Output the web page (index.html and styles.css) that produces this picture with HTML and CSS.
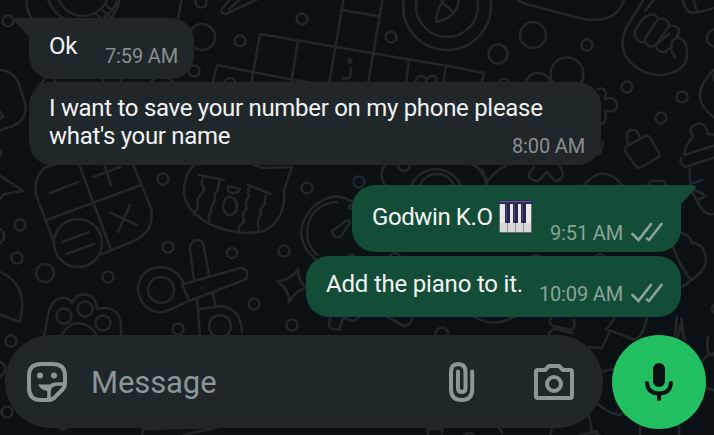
FILE: index.html
```html
<!DOCTYPE html>
<html lang="en">
<head>
  <meta charset="UTF-8">
  <title>Chat</title>
  <link rel="stylesheet" href="styles.css">
</head>
<body>
  <!-- wallpaper -->
  <svg class="wallpaper" viewBox="0 0 714 435" aria-hidden="true">
    <!-- bubbles and dots -->
    <g>
      <circle cx="8" cy="21" r="5.5"/><circle cx="201" cy="2" r="5.5"/><circle cx="202" cy="37" r="13"/>
      <circle cx="240" cy="41" r="5.5"/><circle cx="194" cy="71" r="5.5"/><circle cx="302" cy="19" r="5.5"/>
      <circle cx="391" cy="37" r="5.5"/><circle cx="533" cy="35" r="13"/><circle cx="498" cy="54" r="9.5"/>
      <circle cx="587" cy="45" r="5.5"/><circle cx="567" cy="74" r="16.5"/><circle cx="538" cy="86" r="13"/>
      <circle cx="627" cy="87" r="5.5"/><circle cx="682" cy="97" r="5.5"/><circle cx="661" cy="118" r="5.5"/>
      <circle cx="716" cy="38" r="9"/><circle cx="504" cy="84" r="5"/><circle cx="230" cy="83" r="5"/>
      <circle cx="163" cy="179" r="5.5"/><circle cx="307" cy="188" r="5.5"/><circle cx="359" cy="182" r="5.5"/>
      <circle cx="404" cy="165" r="6"/><circle cx="20" cy="225" r="5.5"/><circle cx="17" cy="258" r="5.5"/>
      <circle cx="-4" cy="236" r="8"/><circle cx="45" cy="273" r="9"/><circle cx="168" cy="247" r="5.5"/>
      <circle cx="232" cy="253" r="5"/><circle cx="284" cy="251" r="5.5"/><circle cx="108" cy="277" r="5.5"/>
      <circle cx="254" cy="304" r="5.5"/><circle cx="292" cy="325" r="5.5"/><circle cx="178" cy="329" r="5.5"/>
      <circle cx="11" cy="341" r="5.5"/><circle cx="-3" cy="369" r="8"/><circle cx="7" cy="412" r="5.5"/>
      <circle cx="442" cy="334" r="6.5"/><circle cx="395" cy="258" r="5"/><circle cx="600" cy="259" r="5"/>
      <circle cx="536" cy="260" r="5"/><circle cx="717" cy="309" r="5"/><circle cx="-4" cy="153" r="5"/>
      <circle cx="351" cy="207" r="2"/><circle cx="351" cy="256" r="2"/><circle cx="469" cy="440" r="7"/>
    </g>
    <!-- watch and folder corners -->
    <g>
      <circle cx="83" cy="-13" r="37"/><circle cx="83" cy="-10" r="26"/>
      <path d="M27 -4Q25 9 32 19M95 13l10 9M101 9l10 9M106 5l9 8M182 -2l-4 20M120 -2q-2 12-9 20"/>
      <path d="M0 70Q14 71 19 84L25 103Q28 119 13 126L-2 131M-1 110l4 7-4 2"/>
      <path d="M37 88l8-9M55 78v6M103 78v6M121 78v6M150 83q4-6 12-6t14 8"/>
      <path d="M222 9L233 -4M222 9Q220 14 226 14L258 -1M229 9L242 -2"/>
    </g>
    <!-- crossword -->
    <g>
      <path d="M344 -3L328 90M383 -3L367 90M341 10L378 16M260 34L448 66L484 73L480 90M260 34L250 90M298 41L290 90M217 65L294 80L340 87M217 65L211 90M409 60L405 90M446 67L442 90"/>
      <path d="M351 68l-1 9q-2 3-7 1" class="thick"/><circle cx="350" cy="61" r="1.2" class="thick"/>
      <path d="M415 84q1-9 7-8 5 1 4 8M426 81q3-7 8-5 4 1 2 8"/>
    </g>
    <!-- compass -->
    <g>
      <circle cx="447" cy="6" r="44"/><circle cx="447" cy="6" r="31"/>
      <path d="M445 -2Q436 10 436 22Q449 20 456 10L460 -2M441 1l12 11"/>
    </g>
    <!-- pillow, fist, brush -->
    <g>
      <path d="M516 -2Q521 4 534 6L575 17Q617 28 625 -3"/>
      <path d="M645 -3L626 28Q619 43 626 57Q640 76 663 75Q688 70 687 54Q687 38 677 38Q669 40 672 52L675 57M645 11L656 -3"/>
      <path d="M649 15Q642 17 635 31Q634 40 641 42Q645 43 646 37L658 19Q656 13 649 15M658 19Q668 17 669 26L656 45Q648 50 645 40M669 26Q681 24 678 36M669 34L656 45Q657 53 665 52L672 46M679 29Q679 33 676 38"/>
      <path d="M682 -2Q685 10 690 12Q695 14 714 8M693 -2L697 12"/>
      <path d="M716 68Q696 86 701 102Q704 110 716 119M716 72q-5 5 0 11"/>
    </g>
    <!-- puzzle, tag, bottle -->
    <g>
      <path d="M598 89q7-2 8 5l-1 5 5-1q8 1 7 9-2 6-9 4l-3 0 1 6q-1 8-8 7M603 142l-3 12-5 0M598 142l-4 12"/>
      <path d="M627 146L645 136Q649 135 651 139L659 153Q660 157 657 158L642 167Q637 169 635 165L626 153Q624 149 627 146M628 144Q625 133 630 130Q638 128 640 139"/>
      <path d="M693 137Q687 127 697 124Q706 122 708 134L716 135M693 137Q686 143 684 155L716 145M681 158Q679 163 685 167L716 157M690 168Q688 186 696 199Q704 217 714 214M693 183l9-3M695 190l8 4M698 200l8-4"/>
      <path d="M534 167L529 174Q528 178 533 180L538 181L547 172L555 181Q559 181 562 177Q565 174 559 165M476 166Q485 178 489 180Q498 168 506 166M482 169l5 14M584 185q19-23 38 0M648 185l3-4h13l2 5"/>
    </g>
    <!-- left star, calculator -->
    <g>
      <path d="M-2 174L23 191L4 194L-2 202"/>
      <path d="M54 242L36 195Q33 177 46 167L60 163M79 164L111 250M47 220L141 185M133 164L151 208Q155 230 136 240L100 255M50 193l28-11M93 177l27-10M104 163l7 22M111 213l26 12M130 205l-12 27M62 242l27-10M66 254l28-10"/>
      <circle cx="78" cy="243" r="24"/>
    </g>
    <!-- jar -->
    <g>
      <path d="M194 165Q183 176 184 194Q187 213 212 225Q242 238 266 230Q286 218 284 190L292 167L263 168L254 165M199 175l25 5M248 185l23 9M204 177q-4 5-1 9t-3 9q-4 6-2 12l-4 8M220 180q-2 5-2 10-5 5-3 10-4 6-4 12-4 4-1 12M250 186q-3 5-1 10-5 6-2 12-6 6-3 14-6 3-5 9M267 193q-3 5-2 11-6 5-4 10-5 7-2 15"/>
      <ellipse cx="230" cy="206" rx="7" ry="9"/><path d="M228 186l12 3q-1 4-7 4t-5-7"/>
    </g>
    <!-- scissors -->
    <g>
      <path d="M184 284L240 268Q248 268 247 276Q247 280 242 281L189 301L182 284M184 284Q176 267 160 267Q138 269 138 291Q142 312 162 312Q168 311 189 301M194 280L190 249Q190 241 197 240Q203 240 204 247L209 276M197 299L200 335M200 309L222 306Q241 309 242 332M213 294l3 13"/>
      <circle cx="161" cy="290" r="13"/><circle cx="220" cy="326" r="11"/><circle cx="202" cy="288" r=".5"/>
    </g>
    <!-- paw, umbrella -->
    <g>
      <path d="M44 336L48 316Q51 297 65 298Q70 299 72 303Q77 292 88 295Q97 298 97 309Q119 304 121 325L121 336M61 336Q68 323 78 323Q91 324 97 336"/>
      <circle cx="64" cy="316" r="7.5"/><circle cx="85" cy="309" r="7.5"/><circle cx="103" cy="323" r="7.5"/>
      <path d="M-2 271Q24 281 22 309L20 322L-2 314"/>
    </g>
    <!-- stopwatch, sparkle, camera ring -->
    <g>
      <path d="M354 203Q333 188 312 208Q292 231 309 253Q315 259 320 263M337 202Q322 202 312 215Q300 238 317 255M332 231L346 221Q350 219 350 223L341 236Q336 239 333 235Z"/>
      <path d="M298 269Q298 286 313 290M298 269Q290 281 277 281Q290 290 289 302Q296 290 306 288"/>
      <path d="M385 186Q378 172 386 164M471 164Q484 169 486 184M411 186a27 27 0 0 1 50 0M420 186a18 18 0 0 1 34 0"/>
      <path d="M330 317l-1 9q0 3 10 4l4-12M343 318l11 3 5-4M387 317l17 9q8-1 8-9M473 316q20 13 43 0"/>
      <path d="M681 233Q690 235 692 243Q704 244 706 258Q706 271 691 280M673 247Q681 268 691 280Q684 287 678 288"/>
    </g>
    <!-- bottom right shapes -->
    <g>
      <path d="M552 317q-5 5 1 9l18 4q5-2 3-10M548 336q3-7 8-7l16 4M615 316q-2 7-9 13l29 11q10-7 12-23M610 331l-8 17-14-1M677 316l-2 20M681 318l3 18M677 340l3-14 5 14M708 337q-3 20 6 18M716 353q-24 3-10 35l10 3M601 372l12-3M597 403q10 10 23 12l6-4M588 412l4 19 8 4M640 425v10M679 425v10M552 428l-2 8M580 435l17-4M428 429h14v3M428 429v7M499 428l3 4M142 436l1-7 76-2-36 8M59 427l4 3 4-3"/>
    </g>
  </svg>

  <div class="screen">
    <main class="messages">
      <div class="bubble received with-tail first">
        <svg class="tail" viewBox="0 0 16 20"><path d="M16 0H2Q-1 1 1 4L16 20Z"/></svg>
        <p class="text">Ok</p>
        <span class="time">7:59 AM</span>
      </div>
      <div class="bubble received long">
        <p class="text">I want to save your number on my phone please<br>what's your name</p>
        <span class="time">8:00 AM</span>
      </div>
      <div class="bubble sent with-tail name">
        <svg class="tail" viewBox="0 0 16 20"><path d="M0 0H13Q17 1 15 4L0 20Z"/></svg>
        <p class="text">Godwin K.O</p>
        <svg class="piano" viewBox="0 0 33 33" role="img" aria-label="piano">
          <rect x=".5" y=".5" width="32" height="32" rx="1" fill="#e9e9eb" stroke="#6c6872"/>
          <path d="M1 23h31v9H1z" fill="#d7d7d9"/>
          <path d="M8.5 23v9M16.5 23v9M24.5 23v9" stroke="#99979e"/>
          <path d="M6 4h5v19H6zM14 4h5v19h-5zM22 4h5v19h-5z" fill="#29264b"/>
          <path d="M7 5h1v16H7zM15 5h1v16h-1zM23 5h1v16h-1z" fill="#504d75"/>
          <path d="M0 0h33v4H0z" fill="#2d2a55"/>
          <path d="M1 1h31v1H1z" fill="#66638b"/>
        </svg>
        <span class="time">9:51 AM</span>
        <svg class="ticks" viewBox="0 0 32 20"><path d="M1.5 12L7.5 18L20 2M16 16.5L18 18L30.5 2"/></svg>
      </div>
      <div class="bubble sent last">
        <p class="text">Add the piano to it.</p>
        <span class="time">10:09 AM</span>
        <svg class="ticks" viewBox="0 0 32 20"><path d="M1.5 12L7.5 18L20 2M16 16.5L18 18L30.5 2"/></svg>
      </div>
    </main>

    <footer class="composer">
      <div class="field">
        <svg class="icon sticker" viewBox="0 0 40 40">
          <path d="M14 2H26Q38 2 38 14V22Q38 25 35 28L27 36Q25 38 22 38H14Q2 38 2 26V14Q2 2 14 2Z"/>
          <path class="fold" d="M22 37V30Q22 22 30 22H37"/>
          <path class="solid" d="M11 22.5H28L21 29Q14 29 11 22.5Z"/>
          <circle class="solid" cx="13" cy="13.5" r="3"/><circle class="solid" cx="27" cy="13.5" r="3"/>
        </svg>
        <span class="placeholder">Message</span>
        <svg class="icon clip" viewBox="0 0 26 40">
          <path d="M23.2 9.5V27Q23.2 38 12.8 38Q2 38 2 27V10Q2 2 9.2 2Q16.5 2 16.5 10V26Q16.5 30 12.8 30Q9 30 9 26V9.5"/>
        </svg>
        <svg class="icon camera" viewBox="0 0 40 36">
          <path d="M4 6H11L15 2H25L29 6H36Q38 6 38 8V32Q38 34 36 34H4Q2 34 2 32V8Q2 6 4 6Z"/>
          <circle cx="20" cy="20" r="7"/>
        </svg>
      </div>
      <button class="mic" aria-label="Record">
        <svg viewBox="0 0 28 38">
          <rect x="8" y="0" width="12" height="24" rx="6"/>
          <path d="M2 20Q3 30.5 14 30.5Q25 30.5 26 20M14 31V36"/>
        </svg>
      </button>
    </footer>
  </div>
</body>
</html>
```

FILE: styles.css
```css
* {
  box-sizing: border-box;
}

body {
  margin: 0;
  background: #0b1014;
  font-family: Roboto, "Liberation Sans", sans-serif;
  overflow: hidden;
}

.wallpaper {
  position: absolute;
  top: 0;
  left: 0;
  width: 714px;
  height: 435px;
  fill: none;
  stroke: #22272b;
  stroke-width: 2.6;
  stroke-linecap: round;
  stroke-linejoin: round;
}

.wallpaper .thick {
  stroke-width: 3;
}

.screen {
  position: relative;
  display: flex;
  flex-direction: column;
  width: 714px;
  height: 435px;
}

.messages {
  display: flex;
  flex-direction: column;
  flex: 1;
  padding: 18px 33px 0 29px;
}

.bubble {
  position: relative;
  display: flex;
  align-items: flex-start;
  padding: 0 16px 0 20px;
  border-radius: 23px;
}

.received {
  align-self: flex-start;
  background: #20272b;
  color: #f2f3f4;
}

.sent {
  align-self: flex-end;
  background: #144d37;
  color: #f2f5f4;
}

.first {
  width: 165px;
  height: 61px;
  padding-top: 14px;
}

.long {
  justify-content: space-between;
  width: 572px;
  height: 83px;
  margin-top: 3px;
  padding-top: 12px;
}

.name {
  width: 329px;
  height: 67px;
  margin-top: 20px;
  padding-top: 18px;
}

.last {
  width: 375px;
  height: 61px;
  margin-top: 4px;
  padding-top: 14px;
}

.received.with-tail {
  border-top-left-radius: 0;
}

.sent.with-tail {
  border-top-right-radius: 0;
}

.tail {
  position: absolute;
  top: 0;
  width: 16px;
  height: 20px;
}

.received .tail {
  left: -15px;
  fill: #20272b;
}

.sent .tail {
  right: -15px;
  fill: #144d37;
}

.text {
  margin: 0;
  font-size: 24px;
  line-height: 28px;
  letter-spacing: -0.3px;
  white-space: nowrap;
}

.name .text {
  letter-spacing: -0.4px;
}

.last .text {
  letter-spacing: -0.2px;
}

.time {
  align-self: flex-end;
  margin-left: auto;
  margin-bottom: 11px;
  font-size: 20px;
  line-height: 24px;
  letter-spacing: -0.15px;
  color: #8a8e90;
  white-space: nowrap;
}

.long .time {
  margin-bottom: 7px;
  margin-left: -80px;
}

.sent .time {
  margin-bottom: 7px;
  color: #88a499;
}

.last .time {
  margin-bottom: 11px;
}

.piano {
  width: 33px;
  height: 33px;
  margin: -3px 0 0 6px;
}

.ticks {
  align-self: flex-end;
  width: 32px;
  height: 20px;
  margin: 0 2px 10px 8px;
  fill: none;
  stroke: #88a499;
  stroke-width: 2.7;
  stroke-linecap: round;
}

.last .ticks {
  margin-bottom: 14px;
}

.composer {
  display: flex;
  gap: 9px;
  height: 100px;
  padding-left: 5px;
}

.field {
  display: flex;
  align-items: center;
  width: 598px;
  height: 93px;
  padding: 0 29px 0 22px;
  background: #20272b;
  border-radius: 47px;
}

.icon {
  fill: none;
  stroke: #8c9598;
  stroke-width: 4;
  stroke-linejoin: round;
  stroke-linecap: round;
}

.icon .solid {
  fill: #8c9598;
  stroke: none;
}

.icon .fold {
  stroke-width: 3.6;
}

.sticker {
  width: 40px;
  height: 40px;
}

.placeholder {
  flex: 1;
  margin-left: 24px;
  padding-top: 2px;
  font-size: 31px;
  line-height: 40px;
  letter-spacing: -0.1px;
  color: #8c9598;
}

.clip {
  width: 26px;
  height: 40px;
  margin-right: 59px;
}

.camera {
  width: 40px;
  height: 36px;
}

.mic {
  display: flex;
  align-items: center;
  justify-content: center;
  width: 94px;
  height: 94px;
  padding: 0;
  border: none;
  border-radius: 50%;
  background: #23c063;
}

.mic svg {
  width: 28px;
  height: 38px;
  fill: #0b1014;
}

.mic path {
  fill: none;
  stroke: #0b1014;
  stroke-width: 4;
  stroke-linecap: round;
}
```
